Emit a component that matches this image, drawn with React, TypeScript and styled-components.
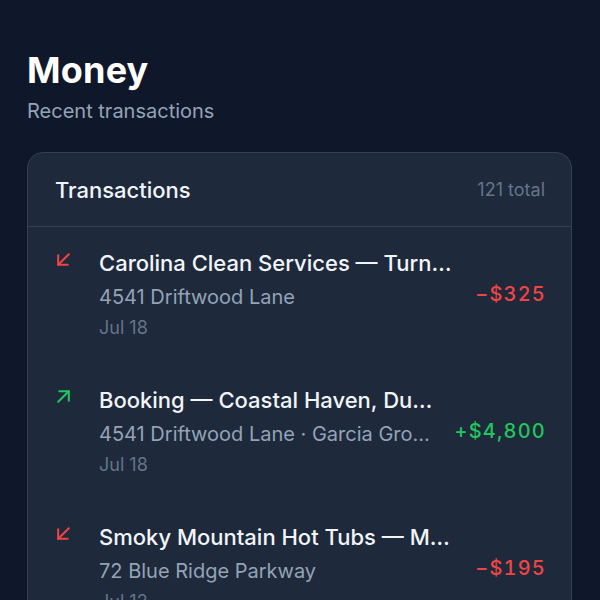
import React from "react";
import styled, { createGlobalStyle } from "styled-components";

const Global = createGlobalStyle`
  html, body { margin: 0; padding: 0; background: #0f172a; }
  body { font-family: Inter, "Noto Sans", "Liberation Sans", sans-serif; -webkit-font-smoothing: antialiased; }
  * { box-sizing: border-box; }
`;

const Page = styled.main`
  height: 600px;
  padding: 48px 28px 0 27px;
  background: #0f172a;
  overflow: hidden;
`;

const Title = styled.h1`
  margin: 0;
  font-size: 36px;
  line-height: 44px;
  font-weight: 700;
  color: #ffffff;
  letter-spacing: 0.2px;
`;

const Subtitle = styled.p`
  margin: 5px 0 0;
  font-size: 20px;
  line-height: 28px;
  color: #94a3b8;
`;

const Card = styled.section`
  margin-top: 27px;
  background: #1e293b;
  border: 1px solid #334155;
  border-radius: 16px;
  overflow: hidden;
`;

const CardHeader = styled.header`
  height: 74px;
  display: flex;
  align-items: center;
  justify-content: space-between;
  padding: 0 26px 0 27px;
  border-bottom: 1px solid #334155;
`;

const CardTitle = styled.h2`
  margin: 0;
  font-size: 22px;
  font-weight: 500;
  color: #f1f5f9;
`;

const Count = styled.span`
  font-size: 18px;
  color: #64748b;
`;

const Row = styled.div`
  display: flex;
  align-items: center;
  gap: 22px;
  padding: 21px 25px 24px 27px;
`;

const Main = styled.div`
  flex: 1;
  min-width: 0;
  display: flex;
  align-items: flex-start;
  gap: 27px;
`;

const IconWrap = styled.span<{ $tone: "in" | "out" }>`
  flex: none;
  display: flex;
  margin-top: 3px;
  color: ${(p) => (p.$tone === "in" ? "#22c55e" : "#ef4444")};
`;

const Texts = styled.div`
  flex: 1;
  min-width: 0;
  display: flex;
  flex-direction: column;
`;

const Name = styled.div`
  font-size: 22px;
  line-height: 30px;
  font-weight: 500;
  color: #f1f5f9;
  white-space: nowrap;
  overflow: hidden;
  text-overflow: ellipsis;
`;

const Meta = styled.div`
  margin-top: 5px;
  font-size: 20px;
  line-height: 28px;
  color: #94a3b8;
  white-space: nowrap;
  overflow: hidden;
  text-overflow: ellipsis;
`;

const DateText = styled.div`
  margin-top: 5px;
  font-size: 18px;
  line-height: 24px;
  color: #64748b;
`;

const Amount = styled.span<{ $tone: "in" | "out" }>`
  flex: none;
  font-size: 20px;
  font-weight: 500;
  letter-spacing: 1.2px;
  font-variant-numeric: tabular-nums;
  color: ${(p) => (p.$tone === "in" ? "#22c55e" : "#ef4444")};
`;

const ArrowIn = () => (
  <svg width="17" height="17" viewBox="0 0 16 16" fill="none" stroke="currentColor" strokeWidth="1.9" strokeLinecap="round" strokeLinejoin="round">
    <path d="M3 13 13 3" />
    <path d="M4 3h9v9" />
  </svg>
);

const ArrowOut = () => (
  <svg width="17" height="17" viewBox="0 0 16 16" fill="none" stroke="currentColor" strokeWidth="1.9" strokeLinecap="round" strokeLinejoin="round">
    <path d="M13 3 3 13" />
    <path d="M12 13H3V4" />
  </svg>
);

type Tx = { tone: "in" | "out"; name: string; meta: string; date: string; amount: string };

const txs: Tx[] = [
  { tone: "out", name: "Carolina Clean Services — Turnover cleaning", meta: "4541 Driftwood Lane", date: "Jul 18", amount: "−$325" },
  { tone: "in", name: "Booking — Coastal Haven, Duck Harbor", meta: "4541 Driftwood Lane · Garcia Group stay", date: "Jul 18", amount: "+$4,800" },
  { tone: "out", name: "Smoky Mountain Hot Tubs — Maintenance", meta: "72 Blue Ridge Parkway", date: "Jul 12", amount: "−$195" },
];

export default function App() {
  return (
    <>
      <Global />
      <Page>
        <Title>Money</Title>
        <Subtitle>Recent transactions</Subtitle>
        <Card>
          <CardHeader>
            <CardTitle>Transactions</CardTitle>
            <Count>121 total</Count>
          </CardHeader>
          {txs.map((t, i) => (
            <Row key={i}>
              <Main>
                <IconWrap $tone={t.tone}>{t.tone === "in" ? <ArrowIn /> : <ArrowOut />}</IconWrap>
                <Texts>
                  <Name>{t.name}</Name>
                  <Meta>{t.meta}</Meta>
                  <DateText>{t.date}</DateText>
                </Texts>
              </Main>
              <Amount $tone={t.tone}>{t.amount}</Amount>
            </Row>
          ))}
        </Card>
      </Page>
    </>
  );
}
